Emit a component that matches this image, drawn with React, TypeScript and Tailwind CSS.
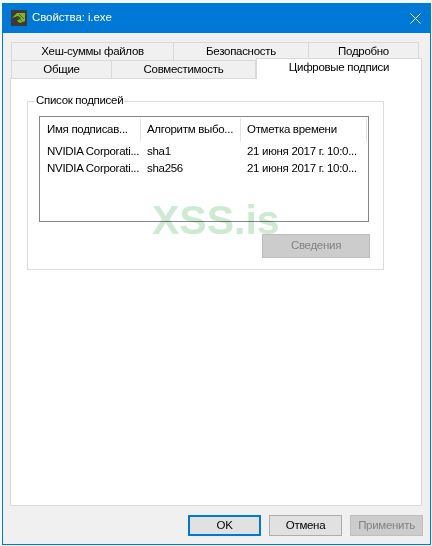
const rows = [
  ['NVIDIA Corporati...', 'sha1', '21 июня 2017 г. 10:0...'],
  ['NVIDIA Corporati...', 'sha256', '21 июня 2017 г. 10:0...'],
]

function Btn({ label, kind }: { label: string; kind?: 'def' | 'off' }) {
  const cls =
    kind === 'def'
      ? 'border-2 border-[#0078d7] bg-[#e1e1e1] text-black'
      : kind === 'off'
        ? 'border border-[#bfbfbf] bg-[#cccccc] text-[#838383]'
        : 'border border-[#adadad] bg-[#e1e1e1] text-black'
  return <div className={`flex h-[21px] w-[73px] items-center justify-center ${cls}`}>{label}</div>
}

export default function App() {
  return (
    <div className="h-[546px] w-[432px] overflow-hidden bg-[#f4f8fc] pl-[2px] pr-[1px] pt-[3px] font-['Liberation_Sans',sans-serif] text-[11.5px] leading-none tracking-[-0.3px] whitespace-nowrap text-black">
      <div className="flex h-[542px] flex-col border-x border-b border-[#0078d7] bg-[#f0f0f0]">
        <div className="flex h-[30px] shrink-0 items-center bg-[#0078d7] pl-[8px] text-white">
          <svg width="16" height="16" viewBox="0 0 16 16" className="mr-[5px]">
            <rect width="16" height="16" fill="#3a3a36" />
            <path d="M1 8 L6 3 L14 3 L14 11 L9 13 L6 11 L10 8 L7 6 Z" fill="#82b81e" />
            <path d="M5 6 L11 11 M8 4 L13 9" stroke="#47621a" strokeWidth="1" fill="none" />
          </svg>
          <span className="tracking-[-0.1px]">Свойства: i.exe</span>
          <svg width="11" height="11" viewBox="0 0 11 11" className="ml-auto mr-[9px]">
            <path d="M0.5 0.5 L10.5 10.5 M10.5 0.5 L0.5 10.5" stroke="#fff" strokeWidth="1" fill="none" />
          </svg>
        </div>
        <div className="relative flex-1 pl-[7px] pt-[9px]">
          <div className="ml-[1px] flex h-[18px]">
            <div className="-mr-px flex w-[163px] items-center justify-center border border-b-0 border-[#d9d9d9]">Хеш-суммы файлов</div>
            <div className="-mr-px flex w-[136px] items-center justify-center border border-b-0 border-[#d9d9d9]">Безопасность</div>
            <div className="flex w-[111px] items-center justify-center border border-b-0 border-[#d9d9d9]">Подробно</div>
          </div>
          <div className="ml-[1px] flex h-[18px] items-end">
            <div className="-mr-px flex h-full w-[101px] items-center justify-center border border-b-0 border-[#d9d9d9]">Общие</div>
            <div className="flex h-full w-[145px] items-center justify-center border border-b-0 border-[#d9d9d9]">Совместимость</div>
            <div className="relative z-10 -mb-px flex h-[21px] w-[166px] shrink-0 justify-center border border-b-0 border-[#d9d9d9] bg-white pt-[3px]">Цифровые подписи</div>
          </div>
          <div className="h-[428px] w-[412px] border border-[#d9d9d9] bg-white pl-[16px] pt-[22px]">
            <div className="relative h-[169px] w-[357px] border border-[#dcdcdc] pl-[11px] pt-[14px]">
              <span className="absolute -top-[7px] left-[7px] bg-white px-[1px]">Список подписей</span>
              <div className="h-[106px] w-[330px] border border-[#828790]">
                <div className="mb-[1px] flex h-[25px] pt-[1px]">
                  <div className="flex w-[101px] items-center border-r border-[#e5e5e5] pl-[7px]">Имя подписав...</div>
                  <div className="flex w-[100px] items-center border-r border-[#e5e5e5] pl-[6px]">Алгоритм выбо...</div>
                  <div className="flex w-[126px] items-center border-r border-[#e5e5e5] pl-[6px]">Отметка времени</div>
                </div>
                {rows.map((r, i) => (
                  <div key={i} className="flex h-[17px] items-center">
                    <div className="w-[101px] pl-[7px]">{r[0]}</div>
                    <div className="w-[100px] pl-[6px]">{r[1]}</div>
                    <div className="w-[126px] pl-[6px]">{r[2]}</div>
                  </div>
                ))}
              </div>
              <div className="ml-[223px] mt-[12px] flex h-[24px] w-[108px] items-center justify-center border border-[#bfbfbf] bg-[#cccccc] text-[#838383]">Сведения</div>
            </div>
          </div>
          {/* watermark sits over the dialog */}
          <div className="absolute left-[149px] top-[167px] z-20 text-[41px] font-bold tracking-normal text-[#cfe9d3] mix-blend-multiply">XSS.is</div>
          <div className="flex w-[413px] justify-end gap-[8px] pt-[9px]">
            <Btn label="OK" kind="def" />
            <Btn label="Отмена" />
            <Btn label="Применить" kind="off" />
          </div>
        </div>
      </div>
    </div>
  )
}
